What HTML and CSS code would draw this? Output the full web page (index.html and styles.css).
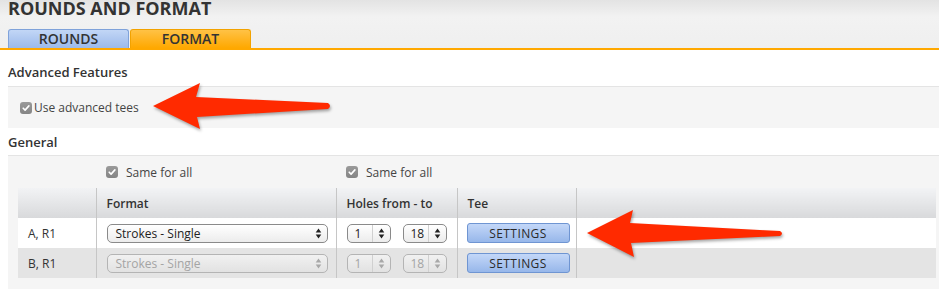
FILE: index.html
```html
<!DOCTYPE html>
<html lang="en">

<head>
  <meta charset="UTF-8">
  <meta name="viewport" content="width=device-width, initial-scale=1.0">
  <title>Rounds and Format</title>
  <link rel="stylesheet" href="styles.css">
</head>

<body>
  <div id="header">
    <h1>ROUNDS AND FORMAT</h1>
    <div class="tabs">
      <a class="tab tab-rounds" href="#">ROUNDS</a>
      <a class="tab tab-format" href="#">FORMAT</a>
    </div>
  </div>

  <h2 class="section-title" id="advancedTitle">Advanced Features</h2>
  <div class="panel" id="advancedPanel">
    <label class="check-label">
      <span class="check"><svg width="12" height="12" viewBox="0 0 12 12"><path d="M3.2 6.2 L5.1 8.1 L8.9 3.9" fill="none" stroke="#fff" stroke-width="1.6" stroke-linecap="round" stroke-linejoin="round"/></svg></span>
      Use advanced tees
    </label>
  </div>

  <h2 class="section-title" id="generalTitle">General</h2>
  <div class="panel" id="generalPanel">
    <table class="rounds">
      <colgroup>
        <col style="width: 78px">
        <col style="width: 240px">
        <col style="width: 121px">
        <col style="width: 119px">
        <col>
      </colgroup>
      <tr class="same-row">
        <td></td>
        <td>
          <label class="same-label">
            <span class="check"><svg width="12" height="12" viewBox="0 0 12 12"><path d="M3.2 6.2 L5.1 8.1 L8.9 3.9" fill="none" stroke="#fff" stroke-width="1.6" stroke-linecap="round" stroke-linejoin="round"/></svg></span>
            Same for all
          </label>
        </td>
        <td>
          <label class="same-label">
            <span class="check"><svg width="12" height="12" viewBox="0 0 12 12"><path d="M3.2 6.2 L5.1 8.1 L8.9 3.9" fill="none" stroke="#fff" stroke-width="1.6" stroke-linecap="round" stroke-linejoin="round"/></svg></span>
            Same for all
          </label>
        </td>
        <td></td>
        <td></td>
      </tr>
      <tr class="head-row">
        <th></th>
        <th>Format</th>
        <th>Holes from - to</th>
        <th>Tee</th>
        <th></th>
      </tr>
      <tr class="row-white">
        <td class="label">A, R1</td>
        <td>
          <div class="select select-wide">
            <span class="select-text">Strokes - Single</span>
            <span class="select-arrows"><svg width="7" height="11" viewBox="0 0 7 11"><path d="M3.5 0.6 L6.3 4.4 H0.7 Z M3.5 10.4 L6.3 6.6 H0.7 Z" fill="#222"/></svg></span>
          </div>
        </td>
        <td>
          <div class="holes">
            <div class="select select-small">
              <span class="select-text">1</span>
              <span class="select-arrows"><svg width="7" height="11" viewBox="0 0 7 11"><path d="M3.5 0.6 L6.3 4.4 H0.7 Z M3.5 10.4 L6.3 6.6 H0.7 Z" fill="#222"/></svg></span>
            </div>
            <div class="select select-small">
              <span class="select-text">18</span>
              <span class="select-arrows"><svg width="7" height="11" viewBox="0 0 7 11"><path d="M3.5 0.6 L6.3 4.4 H0.7 Z M3.5 10.4 L6.3 6.6 H0.7 Z" fill="#222"/></svg></span>
            </div>
          </div>
        </td>
        <td><button class="settings">SETTINGS</button></td>
        <td></td>
      </tr>
      <tr class="row-gray">
        <td class="label">B, R1</td>
        <td>
          <div class="select select-wide disabled">
            <span class="select-text">Strokes - Single</span>
            <span class="select-arrows"><svg width="7" height="11" viewBox="0 0 7 11"><path d="M3.5 0.6 L6.3 4.4 H0.7 Z M3.5 10.4 L6.3 6.6 H0.7 Z" fill="#a8a8a8"/></svg></span>
          </div>
        </td>
        <td>
          <div class="holes">
            <div class="select select-small disabled">
              <span class="select-text">1</span>
              <span class="select-arrows"><svg width="7" height="11" viewBox="0 0 7 11"><path d="M3.5 0.6 L6.3 4.4 H0.7 Z M3.5 10.4 L6.3 6.6 H0.7 Z" fill="#a8a8a8"/></svg></span>
            </div>
            <div class="select select-small disabled">
              <span class="select-text">18</span>
              <span class="select-arrows"><svg width="7" height="11" viewBox="0 0 7 11"><path d="M3.5 0.6 L6.3 4.4 H0.7 Z M3.5 10.4 L6.3 6.6 H0.7 Z" fill="#a8a8a8"/></svg></span>
            </div>
          </div>
        </td>
        <td><button class="settings">SETTINGS</button></td>
        <td></td>
      </tr>
    </table>
  </div>

  <!-- annotation arrows drawn over the page -->
  <svg id="arrows" width="939" height="308" viewBox="0 0 939 308">
    <path d="M153 106 L200 83 L196 97 L328 103 Q332 106 328 109 L197 117 L200 129 Z" fill="#ff2a00"/>
    <path d="M587 233 L633 210 L630 223 L780 231 Q784 233.5 780 236 L631 243 L634 257 Z" fill="#ff2a00"/>
  </svg>
</body>

</html>
```

FILE: styles.css
```css
body {
  margin: 0;
  padding: 0;
  background-color: #ffffff;
  color: #333333;
  font-family: "Open Sans", Arial, sans-serif;
  overflow: hidden;
  position: relative;
}

#header {
  height: 48px;
  background: linear-gradient(#e3e3e3, #f2f2f2 35%, #efefef);
  border-bottom: 2px solid #ffa800;
}

h1 {
  margin: 0;
  padding: 0 8px;
  font-size: 18px;
  line-height: 16px;
  font-weight: 700;
  color: #333333;
}

.tabs {
  display: flex;
  gap: 1px;
  margin: 13px 0 0 8px;
}

.tab {
  box-sizing: border-box;
  width: 121px;
  height: 19px;
  border: 1px solid;
  border-bottom: none;
  border-radius: 3px 3px 0 0;
  text-align: center;
  font-size: 14px;
  line-height: 18px;
  font-weight: 600;
  color: #333333;
  text-decoration: none;
}

.tab-rounds {
  background: linear-gradient(#c2d6f6, #9cbaea);
  border-color: #7fa2da;
}

.tab-format {
  background: linear-gradient(#ffc246, #ffa800);
  border-color: #f2a200;
}

.section-title {
  margin: 0 8px;
  font-size: 13px;
  line-height: 18px;
  font-weight: 600;
  color: #333333;
}

#advancedTitle {
  margin-top: 13px;
  margin-bottom: 5px;
}

#generalTitle {
  margin-top: 5px;
  margin-bottom: 4px;
}

.panel {
  margin-left: 8px;
  background-color: #f5f5f5;
  border-top: 1px solid #e4e4e4;
}

#advancedPanel {
  height: 41px;
  display: flex;
  align-items: center;
  padding-left: 12px;
}

.check-label,
.same-label {
  display: flex;
  align-items: center;
  font-size: 12px;
  color: #444444;
}

.check-label .check {
  margin-right: 2px;
}

.same-label .check {
  margin-right: 8px;
}

.check {
  width: 12px;
  height: 12px;
  border-radius: 3px;
  background: linear-gradient(#9a9a9a, #858585);
  display: flex;
}

#generalPanel {
  padding: 0 0 11px 10px;
}

.rounds {
  width: 918px;
  table-layout: fixed;
  border-collapse: collapse;
  font-size: 12px;
  color: #333333;
}

.rounds td,
.rounds th {
  padding: 0 0 0 10px;
  text-align: left;
}

.same-row td {
  height: 32px;
}

.head-row th {
  height: 30px;
  font-weight: 600;
  background: linear-gradient(#f2f3f5, #d8d9db);
}

.head-row th + th,
.row-white td + td,
.row-gray td + td {
  border-left: 1px solid #c6c6c6;
}

.row-white td,
.row-gray td {
  height: 30px;
}

.row-white {
  background-color: #ffffff;
}

.row-gray {
  background-color: #e4e4e4;
}

.select {
  box-sizing: border-box;
  height: 19px;
  display: flex;
  align-items: center;
  border: 1px solid #8a8a8a;
  border-radius: 5px;
  background: linear-gradient(#ffffff, #ececec);
  box-shadow: inset 0 1px 0 #ffffff;
}

.select-text {
  flex: 1;
  padding-left: 8px;
  line-height: 17px;
  color: #222222;
}

.select-arrows {
  width: 17px;
  height: 17px;
  border-left: 1px solid #d0d0d0;
  display: flex;
  align-items: center;
  justify-content: center;
}

.select-wide {
  width: 221px;
}

.select-wide .select-arrows {
  border-left-color: transparent;
}

.select-small {
  width: 44px;
}

.select-small .select-text {
  padding-left: 7px;
}

.select.disabled {
  border-color: #b4b4b4;
  background: linear-gradient(#f1f1f1, #e2e2e2);
  box-shadow: none;
}

.select.disabled .select-text {
  color: #a4a4a4;
}

.holes {
  display: flex;
  gap: 12px;
}

.settings {
  box-sizing: border-box;
  width: 103px;
  height: 20px;
  margin-left: -1px;
  padding: 0;
  border: 1px solid #6f95d2;
  border-radius: 3px;
  background: linear-gradient(#c3d7f8, #97b7ea);
  font-family: "Open Sans", Arial, sans-serif;
  font-size: 12px;
  letter-spacing: 0.4px;
  color: #2a2a2a;
  cursor: pointer;
}

#arrows {
  position: absolute;
  top: 0;
  left: 0;
  pointer-events: none;
  filter: drop-shadow(1px 2px 1.5px rgba(0, 0, 0, 0.35));
}
```
